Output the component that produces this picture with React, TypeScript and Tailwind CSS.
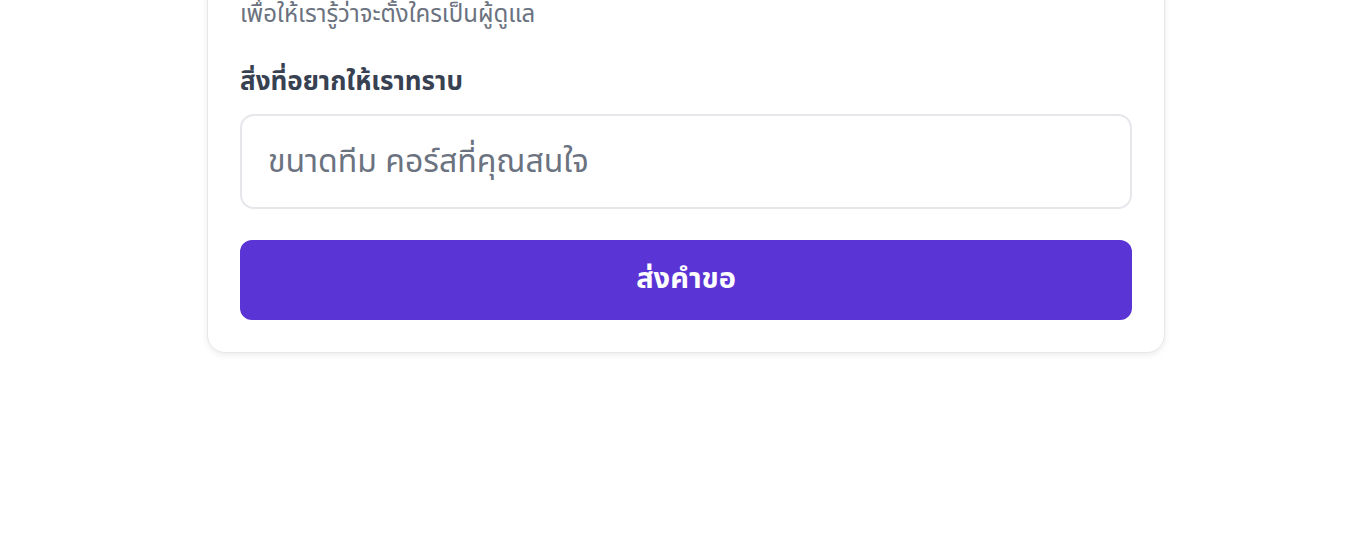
import { useState } from "react";

const App = () => {
  const [note, setNote] = useState("");

  return (
    <div className="min-h-screen bg-white font-['Noto_Sans_Thai','Noto_Sans','DejaVu_Sans',sans-serif]">
      <div className="w-[958px] mx-auto -mt-[33px]">
        <form
          className="bg-white border border-[#e5e7eb] rounded-[18px] shadow-[0_2px_6px_rgba(0,0,0,0.08)] p-8 flex flex-col"
          onSubmit={(e) => e.preventDefault()}
        >
          <p className="text-[24px] leading-[30px] text-[#6b7280]">
            เพื่อให้เรารู้ว่าจะตั้งใครเป็นผู้ดูแล
          </p>
          <label className="mt-[34px] text-[26px] leading-[36px] font-bold text-[#374151]">
            สิ่งที่อยากให้เราทราบ
          </label>
          <input
            value={note}
            onChange={(e) => setNote(e.target.value)}
            placeholder="ขนาดทีม คอร์สที่คุณสนใจ"
            className="mt-[14px] h-[95px] rounded-[14px] border-2 border-[#e5e7eb] px-[26px] text-[32px] text-[#374151] placeholder:text-[#6b7280] outline-none"
          />
          <button
            type="submit"
            className="mt-[31px] h-[80px] rounded-[12px] bg-[#5b34d6] text-white text-[29px] font-bold"
          >
            ส่งคำขอ
          </button>
        </form>
      </div>
    </div>
  );
};

export default App;
